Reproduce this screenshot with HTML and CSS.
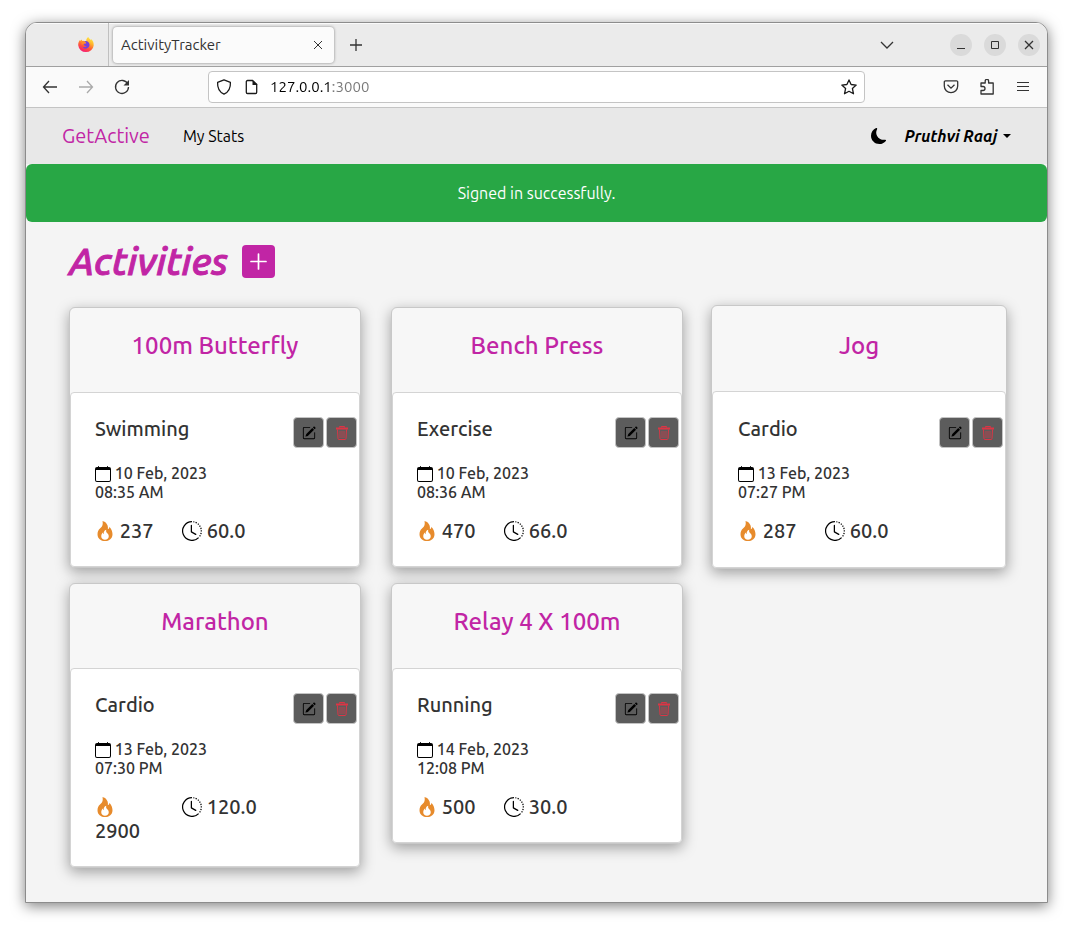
FILE: index.html
```html
<!DOCTYPE html>
<html lang="en">
<head>
<meta charset="utf-8">
<title>ActivityTracker</title>
<link rel="stylesheet" href="styles.css">
</head>
<body>
<svg class="sprite" aria-hidden="true">
  <symbol id="edit" viewBox="0 0 16 16"><path fill="currentColor" d="M15.502 1.94a.5.5 0 0 1 0 .706L14.459 3.69l-2-2L13.502.646a.5.5 0 0 1 .707 0l1.293 1.293zm-1.75 2.456-2-2L4.939 9.21a.5.5 0 0 0-.121.196l-.805 2.414a.25.25 0 0 0 .316.316l2.414-.805a.5.5 0 0 0 .196-.12l6.813-6.814z"/><path fill="currentColor" d="M1 13.5A1.5 1.5 0 0 0 2.5 15h11a1.5 1.5 0 0 0 1.5-1.5v-6a.5.5 0 0 0-1 0v6a.5.5 0 0 1-.5.5h-11a.5.5 0 0 1-.5-.5v-11a.5.5 0 0 1 .5-.5H9a.5.5 0 0 0 0-1H2.5A1.5 1.5 0 0 0 1 2.5v11z"/></symbol>
  <symbol id="trash" viewBox="0 0 14 14"><g fill="none" stroke="currentColor"><path d="M1 2.500h12" stroke-width="2"/><path d="M4.500 1.500v-1h5v1"/><path d="M2.500 3.500l.5 9q.100 1 1 1h6q.900 0 1-1l.5-9"/><path d="M5 5v7M7 5v7M9 5v7" stroke-width=".7"/></g></symbol>
  <symbol id="calendar" viewBox="0 0 16 16"><path fill="currentColor" d="M3.5 0a.5.5 0 0 1 .5.5V1h8V.5a.5.5 0 0 1 1 0V1h1a2 2 0 0 1 2 2v11a2 2 0 0 1-2 2H2a2 2 0 0 1-2-2V3a2 2 0 0 1 2-2h1V.5a.5.5 0 0 1 .5-.5zM1 4v10a1 1 0 0 0 1 1h12a1 1 0 0 0 1-1V4H1z"/></symbol>
  <symbol id="fire" viewBox="0 0 16 16"><path fill="currentColor" d="M8 16c3.314 0 6-2 6-5.5 0-1.5-.5-4-2.5-6 .25 1.5-1.25 2-1.25 2C11 4 9 .5 6 0c.357 2 .5 4-2 6-1.25 1-2 2.729-2 4.5C2 14 4.686 16 8 16Zm0-1c-1.657 0-3-1-3-2.75 0-.75.25-2 1.25-3C6.125 10 7 10.5 7 10.5c-.375-1.25.5-3.25 2-3.5-.179 1-.25 2 1 3 .625.5 1 1.364 1 2.25C11 14 9.657 15 8 15Z"/></symbol>
  <symbol id="clock" viewBox="0 0 16 16"><g fill="none" stroke="currentColor"><path d="M8 .5A7.5 7.5 0 1 0 13.3 13.3"/><path d="M9 .6A7.5 7.5 0 0 1 13.9 12.6" stroke-dasharray="1 1"/><path d="M7.5 3.5v5.2l3.5 2" stroke-linecap="round" stroke-linejoin="round"/></g></symbol>
</svg>
<div class="window">
  <header class="tabbar">
    <div class="pinned">
      <svg width="16" height="16" viewBox="0 0 16 16" role="img" aria-label="Firefox">
        <defs>
          <linearGradient id="flame" x1=".8" y1="0" x2=".3" y2="1"><stop offset="0" stop-color="#fff04a"/><stop offset=".35" stop-color="#ffb32c"/><stop offset=".65" stop-color="#ff5a36"/><stop offset="1" stop-color="#f5157a"/></linearGradient>
        </defs>
        <path fill="url(#flame)" d="M10.2 0c.6 1.2 1.6 2 2.700 3 .2-.2.2-.5.100-.900C15 3.600 15.900 5.800 15.700 8.400A7.800 7.600 0 0 1 .2 8.300C.1 6.100.9 4.100 2 2.900l.3 1.200c.3-.7.7-1.200 1.300-1.600.1.6.3 1 .7 1.400 1.300-.2 2 .100 2.700.600L8.300 4C8.100 2.300 9 1 10.200 0Z"/>
        <path fill="#7540dc" d="M6.200 4.200c2.600-.8 5.400.9 5.400 3.900a3.700 3.700 0 0 1-6.900 1.700c1.700.7 3.200-.1 3.900-.9-1.700.1-3-.6-2.900-1.500.1-.8 1.300-.6 2-.9.900-.4.3-1.300-1.500-2.300Z"/>
        <path fill="#ff8a2b" d="M4.300 3.900c1.500-.1 2.700.4 3.600 1.400-.9.200-1.500.6-1.700 1.200-.8 0-2.200.600-2.200 2-.5-1.700-.400-3.300.3-4.600Z"/>
      </svg>
    </div>
    <div class="tab">
      <span class="tab-title">ActivityTracker</span>
      <button class="bare" aria-label="Close tab"><svg width="14" height="14" viewBox="0 0 14 14"><path class="line" d="M3 3l8 8M11 3l-8 8"/></svg></button>
    </div>
    <button class="bare new-tab" aria-label="New tab"><svg width="14" height="14" viewBox="0 0 14 14"><path class="line thick" d="M7 1v12M1 7h12"/></svg></button>
    <div class="window-controls">
      <button class="bare list-tabs" aria-label="List tabs"><svg width="14" height="14" viewBox="0 0 14 14"><path class="line thick" d="M1 4l6 6 6-6"/></svg></button>
      <button class="round" aria-label="Minimize"><svg width="10" height="10" viewBox="0 0 10 10"><path class="line" d="M1 8.500h8"/></svg></button>
      <button class="round" aria-label="Maximize"><svg width="10" height="10" viewBox="0 0 10 10"><path class="line" d="M1.500 1.500h7v7h-7z"/></svg></button>
      <button class="round" aria-label="Close"><svg width="10" height="10" viewBox="0 0 10 10"><path class="line thick" d="M1 1l8 8M9 1l-8 8"/></svg></button>
    </div>
  </header>
  <div class="toolbar">
    <div class="history">
      <button class="bare" aria-label="Back"><svg width="16" height="16" viewBox="0 0 16 16"><path class="line thick" d="M15 8H1.500M7 2L1.500 8 7 14"/></svg></button>
      <button class="bare faded" aria-label="Forward"><svg width="16" height="16" viewBox="0 0 16 16"><path class="line thick" d="M1 8h13.500M9 2l5.500 6L9 14"/></svg></button>
      <button class="bare" aria-label="Reload"><svg width="16" height="16" viewBox="0 0 16 16"><path class="line thick" d="M13.800 5A6.500 6.500 0 1 0 14.500 8"/><path fill="currentColor" d="M15 1v5.500H9.500z"/></svg></button>
    </div>
    <div class="urlbar">
      <svg width="16" height="16" viewBox="0 0 16 16"><path class="line thick" d="M8 .8l6.400 2.600c.3 5.200-1.500 9.600-6.400 11.800C3.100 13 1.300 8.600 1.600 3.400z" stroke-linejoin="round"/></svg>
      <svg width="14" height="16" viewBox="0 0 14 16"><path class="line thick" d="M8.500 1.500H3.500a1.200 1.200 0 0 0-1.200 1.200v10.600a1.200 1.200 0 0 0 1.200 1.200h8a1.200 1.200 0 0 0 1.200-1.200V5.200z"/><path fill="currentColor" d="M8.500 1l5 5h-5z"/></svg>
      <input class="address" type="text" value="127.0.0.1:3000" aria-label="Address">
      <button class="bare" aria-label="Bookmark"><svg width="16" height="16" viewBox="0 0 16 16"><path class="line thick" stroke-linejoin="round" d="M8 .9l2.100 4.600 5.100.6-3.800 3.400 1.100 5.300L8 12.300l-4.500 2.500 1.100-5.300L.8 6.100l5.100-.6z"/></svg></button>
    </div>
    <div class="tools">
      <button class="bare" aria-label="Pocket"><svg width="16" height="16" viewBox="0 0 16 16"><path class="line thick" d="M2.500 1.800h11a1.200 1.200 0 0 1 1.200 1.200v4a6.700 6.700 0 0 1-13.400 0V3a1.200 1.200 0 0 1 1.200-1.200zM4.500 5.800L8 9.200l3.500-3.400"/></svg></button>
      <button class="bare" aria-label="Extensions"><svg width="16" height="16" viewBox="0 0 16 16"><path class="line thick" stroke-linejoin="round" d="M2 7.500V4h4.200V2a1.700 1.700 0 0 1 3.400 0v2h4.600v11H2v-3.500h2a1.800 1.800 0 0 0 0-4H2z"/></svg></button>
      <button class="bare" aria-label="Menu"><svg width="16" height="16" viewBox="0 0 16 16"><path class="line" d="M2 3.500h12M2 7.500h12M2 11.500h12"/></svg></button>
    </div>
  </div>

  <nav class="navbar">
    <a class="brand" href="#">GetActive</a>
    <a class="nav-link" href="#">My Stats</a>
    <button class="bare theme" aria-label="Dark mode"><svg width="16" height="16" viewBox="0 0 16 16"><path fill="currentColor" d="M6 .278a.768.768 0 0 1 .08.858 7.208 7.208 0 0 0-.878 3.46c0 4.021 3.278 7.277 7.318 7.277.527 0 1.040-.055 1.533-.160a.787.787 0 0 1 .810.316.733.733 0 0 1-.031.893A8.349 8.349 0 0 1 8.344 16C3.734 16 0 12.286 0 7.710 0 4.266 2.114 1.312 5.124.060A.752.752 0 0 1 6 .278z"/></svg></button>
    <button class="bare user">Pruthvi Raaj<span class="caret"></span></button>
  </nav>
  <p class="notice" role="status">Signed in successfully.</p>

  <main class="page">
    <div class="heading">
      <h1>Activities</h1>
      <button class="add" aria-label="Add activity"><svg width="17" height="17" viewBox="0 0 17 17"><path d="M8.500 1v15M1 8.500h15" stroke="currentColor" stroke-width="1.700" stroke-linecap="round"/></svg></button>
    </div>
    <div class="cards">
      <article class="card">
        <h2>100m Butterfly</h2>
        <div class="card-body">
          <div class="card-top"><h3>Swimming</h3>
            <button class="action" aria-label="Edit"><svg class="i-small"><use href="#edit"/></svg></button>
            <button class="action danger" aria-label="Delete"><svg class="i-small"><use href="#trash"/></svg></button></div>
          <p class="date"><svg class="i-date"><use href="#calendar"/></svg> 10 Feb, 2023<br>08:35 AM</p>
          <div class="stats"><span><svg class="i-stat fire"><use href="#fire"/></svg> 237</span><span><svg class="i-stat"><use href="#clock"/></svg> 60.0</span></div>
        </div>
      </article>
      <article class="card">
        <h2>Bench Press</h2>
        <div class="card-body">
          <div class="card-top"><h3>Exercise</h3>
            <button class="action" aria-label="Edit"><svg class="i-small"><use href="#edit"/></svg></button>
            <button class="action danger" aria-label="Delete"><svg class="i-small"><use href="#trash"/></svg></button></div>
          <p class="date"><svg class="i-date"><use href="#calendar"/></svg> 10 Feb, 2023<br>08:36 AM</p>
          <div class="stats"><span><svg class="i-stat fire"><use href="#fire"/></svg> 470</span><span><svg class="i-stat"><use href="#clock"/></svg> 66.0</span></div>
        </div>
      </article>
      <article class="card raised">
        <h2>Jog</h2>
        <div class="card-body">
          <div class="card-top"><h3>Cardio</h3>
            <button class="action" aria-label="Edit"><svg class="i-small"><use href="#edit"/></svg></button>
            <button class="action danger" aria-label="Delete"><svg class="i-small"><use href="#trash"/></svg></button></div>
          <p class="date"><svg class="i-date"><use href="#calendar"/></svg> 13 Feb, 2023<br>07:27 PM</p>
          <div class="stats"><span><svg class="i-stat fire"><use href="#fire"/></svg> 287</span><span><svg class="i-stat"><use href="#clock"/></svg> 60.0</span></div>
        </div>
      </article>
      <article class="card">
        <h2>Marathon</h2>
        <div class="card-body">
          <div class="card-top"><h3>Cardio</h3>
            <button class="action" aria-label="Edit"><svg class="i-small"><use href="#edit"/></svg></button>
            <button class="action danger" aria-label="Delete"><svg class="i-small"><use href="#trash"/></svg></button></div>
          <p class="date"><svg class="i-date"><use href="#calendar"/></svg> 13 Feb, 2023<br>07:30 PM</p>
          <div class="stats"><span><svg class="i-stat fire"><use href="#fire"/></svg> 2900</span><span><svg class="i-stat"><use href="#clock"/></svg> 120.0</span></div>
        </div>
      </article>
      <article class="card">
        <h2>Relay 4 X 100m</h2>
        <div class="card-body">
          <div class="card-top"><h3>Running</h3>
            <button class="action" aria-label="Edit"><svg class="i-small"><use href="#edit"/></svg></button>
            <button class="action danger" aria-label="Delete"><svg class="i-small"><use href="#trash"/></svg></button></div>
          <p class="date"><svg class="i-date"><use href="#calendar"/></svg> 14 Feb, 2023<br>12:08 PM</p>
          <div class="stats"><span><svg class="i-stat fire"><use href="#fire"/></svg> 500</span><span><svg class="i-stat"><use href="#clock"/></svg> 30.0</span></div>
        </div>
      </article>
    </div>
  </main>
</div>
</body>
</html>
```
FILE: styles.css
```css
* { box-sizing: border-box; }
body {
  margin: 0;
  min-height: 100vh;
  padding: 22px 25px 28px;
  display: flex;
  background: #fff;
  color: #333;
  font: 16px/20px Ubuntu, "Noto Sans", sans-serif;
}
h1, h2, h3, p { margin: 0; }
button, input { font: inherit; color: inherit; }
a { text-decoration: none; }
.sprite { position: absolute; width: 0; height: 0; }
.line { fill: none; stroke: currentColor; }
.thick { stroke-width: 1.3; }

.window {
  flex: 1;
  min-width: 0;
  display: flex;
  flex-direction: column;
  overflow: hidden;
  border: 1px solid #8c8c8c;
  border-radius: 12px 12px 0 0;
  background: #f4f4f4;
  box-shadow: 0 3px 14px rgba(0, 0, 0, .5);
}
.bare {
  display: flex;
  align-items: center;
  padding: 0;
  border: 0;
  background: none;
}

/* Browser chrome */
.tabbar {
  display: flex;
  align-items: center;
  height: 44px;
  background: #ebebeb;
  border-bottom: 1px solid #a0a0a0;
  box-shadow: inset 0 1px #fafafa;
}
.pinned {
  display: flex;
  align-items: center;
  align-self: stretch;
  justify-content: flex-end;
  width: 83px;
  padding-right: 14px;
  border-right: 1px solid #c0c0c0;
}
.tab {
  display: flex;
  align-items: center;
  justify-content: space-between;
  width: 221px;
  height: 36px;
  margin-left: 4px;
  padding: 0 9px 0 8px;
  border-radius: 4px;
  background: #fbfbfb;
  box-shadow: 0 0 3px rgba(0, 0, 0, .45);
}
.tab-title { font-size: 15px; }
.new-tab { margin-left: 15px; }
.window-controls {
  display: flex;
  align-items: center;
  gap: 12px;
  margin-left: auto;
  padding-right: 7px;
}
.list-tabs { margin-right: 44px; }
.round {
  display: grid;
  place-items: center;
  width: 22px;
  height: 22px;
  padding: 0;
  border: 0;
  border-radius: 50%;
  background: #dadada;
}
.toolbar {
  display: flex;
  align-items: center;
  height: 41px;
  padding: 0 16px;
  background: #fafafa;
  border-bottom: 1px solid #c4c4c4;
}
.history, .tools { display: flex; gap: 20px; }
.faded { color: #aaa; }
.urlbar {
  flex: 1;
  display: flex;
  align-items: center;
  gap: 12px;
  height: 32px;
  margin: 0 78px;
  padding: 0 7px;
  border: 1px solid #c4c4c4;
  border-radius: 4px;
  background: #fff;
  color: #1a1a1a;
}
.address {
  flex: 1;
  min-width: 0;
  padding: 0;
  border: 0;
  outline: 0;
  font-size: 15px;
  color: transparent;
  background: linear-gradient(90deg, #000 63px, #777 63px);
  background-clip: text;
  -webkit-background-clip: text;
}

/* Site navigation */
.navbar {
  display: flex;
  align-items: center;
  height: 56px;
  padding: 0 36px;
  background: #e8e8e8;
  color: #000;
}
.brand { font-size: 20px; line-height: 24px; color: #c125a5; }
.nav-link { margin-left: 33px; color: #000; }
.theme { margin-left: auto; }
.user { margin-left: 17px; font-weight: 700; font-style: italic; }
.caret {
  margin-left: 6px;
  border: 4px solid transparent;
  border-top-color: #000;
  border-bottom: 0;
}
.notice {
  padding: 19px 20px;
  border-radius: 6px;
  background: #28a745;
  color: #fff;
  text-align: center;
}

/* Activities */
.page { padding: 16px 42px 30px 43px; }
.heading {
  display: flex;
  align-items: center;
  gap: 14px;
  height: 47px;
  margin-bottom: 22px;
}
h1 {
  padding-bottom: 2px;
  color: #c125a5;
  font-size: 38px;
  line-height: 44px;
  font-weight: 500;
  font-style: italic;
  -webkit-text-stroke: 1px #c125a5;
}
.add {
  display: grid;
  place-items: center;
  width: 33px;
  height: 33px;
  padding: 0;
  border: 0;
  border-radius: 4px;
  background: #c125a5;
  color: #fff;
}
.cards {
  display: grid;
  grid-template-columns: repeat(3, minmax(0, 1fr));
  align-items: start;
  gap: 15px 30px;
}
.card {
  border: 1px solid #c8c8c8;
  border-radius: 6px;
  background: #f7f7f7;
  box-shadow: 0 4px 14px rgba(0, 0, 0, .35);
}
.card h2 {
  padding: 24px 12px 32px;
  color: #c125a5;
  font-size: 24px;
  line-height: 28px;
  font-weight: 500;
  text-align: center;
}
.card-body {
  padding: 24px 2px 23px 24px;
  border: 1px solid #d4d4d4;
  border-radius: 4px;
  background: #fff;
}
.raised { margin: -2px; }
.raised h2 { padding: 26px 12px 31px; }
.raised .card-body { padding: 25px 2px 24px 25px; }
.card-top {
  display: flex;
  align-items: flex-start;
  gap: 2px;
  margin-bottom: 16px;
}
h3 { flex: 1; font-size: 20px; line-height: 24px; font-weight: 500; }
.action {
  display: grid;
  place-items: center;
  width: 31px;
  height: 31px;
  padding: 0;
  border: 1px solid #c4c4c4;
  border-radius: 4px;
  background: #5c5c5c;
  color: #000;
}
.danger { color: #dc3545; }
.i-small { width: 14px; height: 14px; }
.i-date { width: 16px; height: 16px; vertical-align: -3px; color: #000; }
.i-stat { width: 20px; height: 20px; vertical-align: -3px; color: #000; }
.fire { color: #e78b2c; }
.date { margin-bottom: 17px; line-height: 19px; font-weight: 500; }
.stats {
  display: grid;
  grid-template-columns: 64px 1fr;
  gap: 23px;
  font-size: 20px;
  line-height: 24px;
  font-weight: 500;
}
```
